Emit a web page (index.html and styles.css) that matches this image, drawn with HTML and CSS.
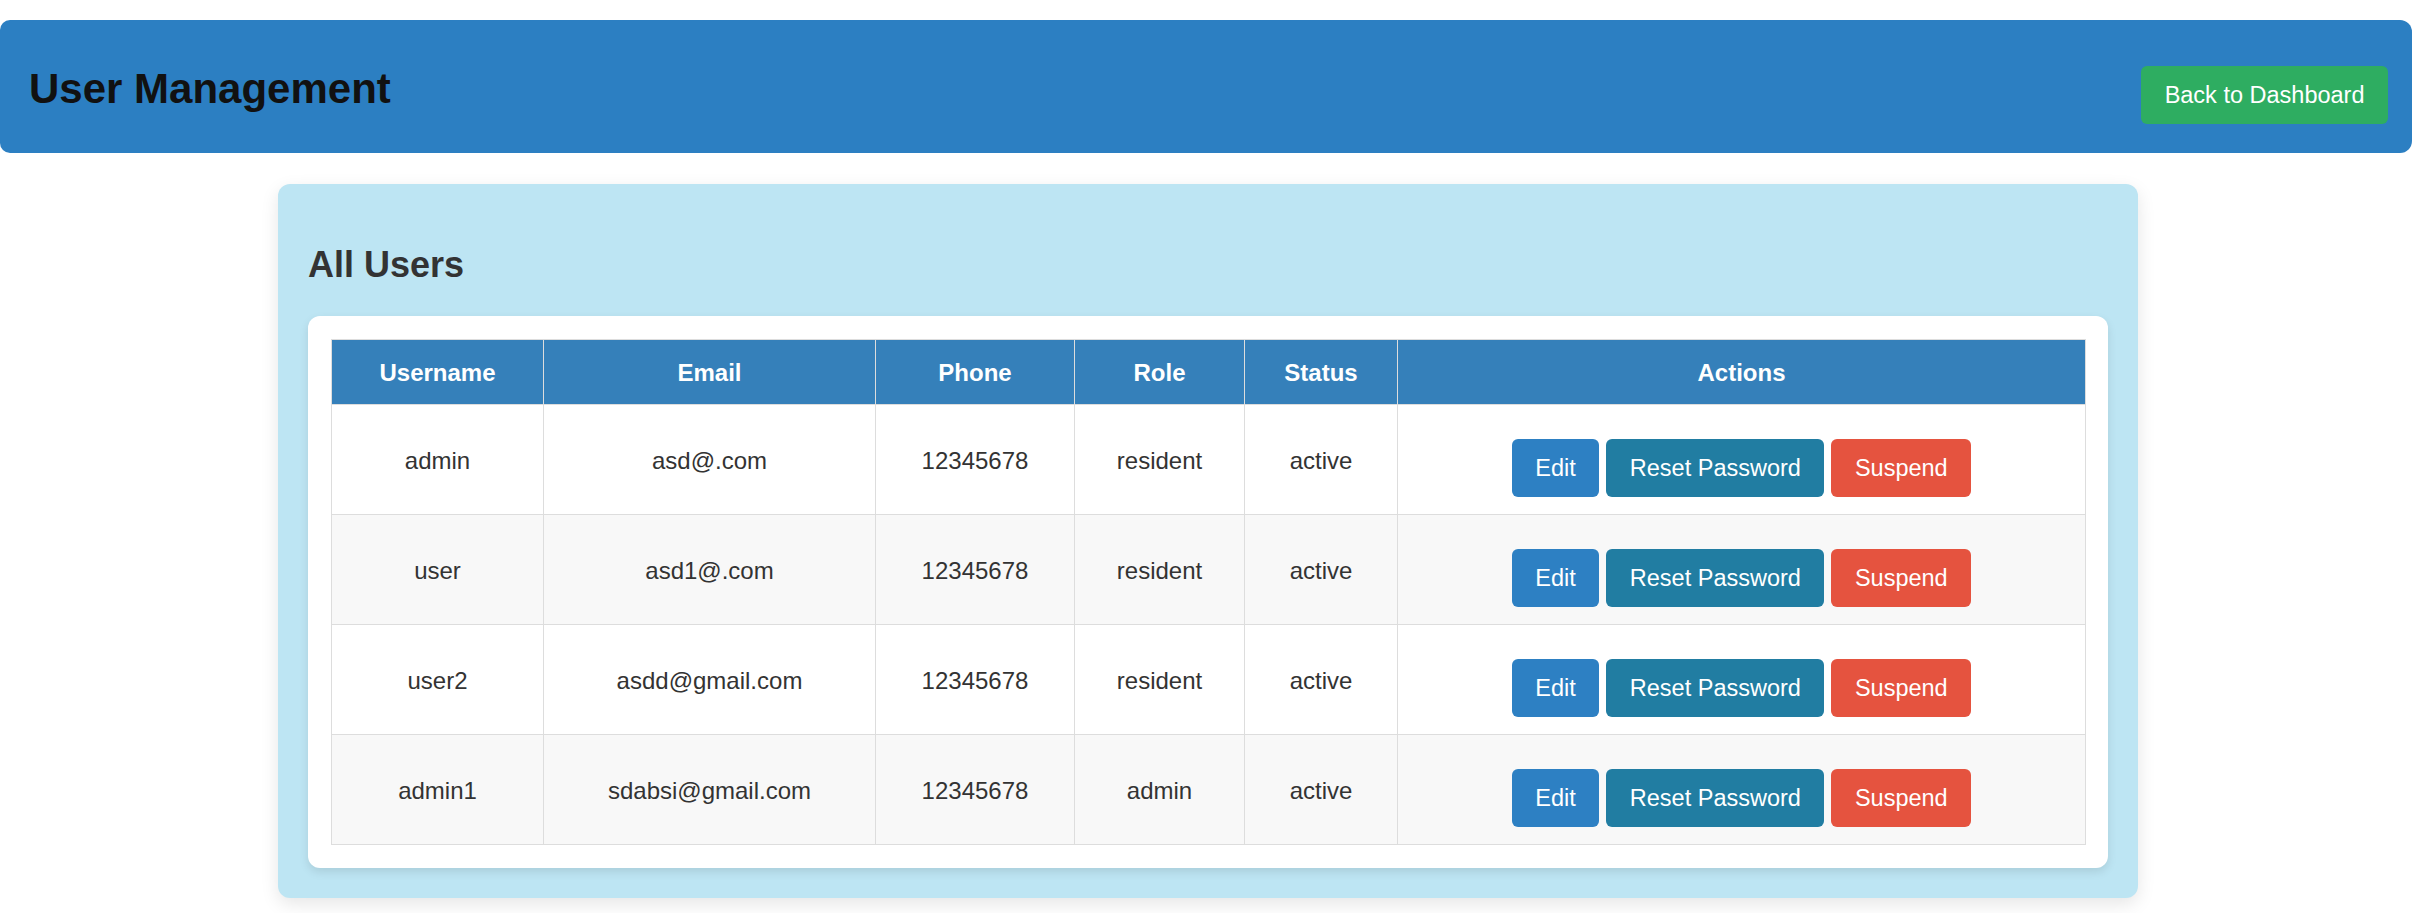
FILE: index.html
```html
<!DOCTYPE html>
<html lang="en">
<head>
<meta charset="utf-8">
<title>User Management</title>
<link rel="stylesheet" href="styles.css">
</head>
<body>
<div class="page">
  <header class="topbar">
    <h1 class="title">User Management</h1>
    <button class="btn btn-green">Back to Dashboard</button>
  </header>
  <main class="panel">
    <h2 class="panel-title">All Users</h2>
    <div class="table-box">
      <table class="users">
        <colgroup>
          <col class="c-user"><col class="c-email"><col class="c-phone"><col class="c-role"><col class="c-status"><col class="c-actions">
        </colgroup>
        <thead>
          <tr><th>Username</th><th>Email</th><th>Phone</th><th>Role</th><th>Status</th><th>Actions</th></tr>
        </thead>
        <tbody>
          <tr>
            <td>admin</td><td>asd@.com</td><td>12345678</td><td>resident</td><td>active</td>
            <td><div class="actions"><button class="btn btn-blue">Edit</button><button class="btn btn-teal">Reset Password</button><button class="btn btn-red">Suspend</button></div></td>
          </tr>
          <tr>
            <td>user</td><td>asd1@.com</td><td>12345678</td><td>resident</td><td>active</td>
            <td><div class="actions"><button class="btn btn-blue">Edit</button><button class="btn btn-teal">Reset Password</button><button class="btn btn-red">Suspend</button></div></td>
          </tr>
          <tr>
            <td>user2</td><td>asdd@gmail.com</td><td>12345678</td><td>resident</td><td>active</td>
            <td><div class="actions"><button class="btn btn-blue">Edit</button><button class="btn btn-teal">Reset Password</button><button class="btn btn-red">Suspend</button></div></td>
          </tr>
          <tr>
            <td>admin1</td><td>sdabsi@gmail.com</td><td>12345678</td><td>admin</td><td>active</td>
            <td><div class="actions"><button class="btn btn-blue">Edit</button><button class="btn btn-teal">Reset Password</button><button class="btn btn-red">Suspend</button></div></td>
          </tr>
        </tbody>
      </table>
    </div>
  </main>
</div>
</body>
</html>
```
FILE: styles.css
```css
html, body {
  margin: 0;
  padding: 0;
  background: #ffffff;
  font-family: "Liberation Sans", Arial, sans-serif;
}

.page {
  width: 2416px;
  padding-bottom: 20px;
}

.topbar {
  margin: 20px 4px 0 0;
  height: 133px;
  box-sizing: border-box;
  padding: 45px 24px 0 29px;
  background: #2c7fc2;
  border-radius: 10px 12px 12px 10px;
  display: flex;
  justify-content: space-between;
  align-items: flex-start;
}

.title {
  margin: 0;
  font-size: 42px;
  line-height: 47px;
  font-weight: bold;
  color: #111111;
}

.btn {
  font-family: "Liberation Sans", Arial, sans-serif;
  font-size: 23.5px;
  line-height: 27px;
  padding: 15.5px 23.5px;
  border: none;
  border-radius: 6px;
  color: #ffffff;
  cursor: pointer;
}

.topbar .btn {
  margin-top: 1px;
}

.btn-green { background: #2ead61; }
.btn-blue { background: #2d80c3; }
.btn-teal { background: #217da2; }
.btn-red { background: #e5533f; }

.panel {
  width: 1860px;
  box-sizing: border-box;
  margin: 31px auto 0;
  padding: 0 30px 30px;
  background: #bde5f3;
  border-radius: 12px;
  box-shadow: 0 6px 18px rgba(0, 0, 0, 0.1);
}

.panel-title {
  margin: 0;
  padding-top: 60px;
  margin-bottom: 31px;
  font-size: 36px;
  line-height: 41px;
  font-weight: bold;
  color: #333333;
}

.table-box {
  background: #ffffff;
  border-radius: 12px;
  padding: 23px;
  box-shadow: 0 4px 10px rgba(0, 0, 0, 0.1);
}

.users {
  width: 100%;
  border-collapse: collapse;
  table-layout: fixed;
  font-size: 24px;
}

.c-user { width: 212px; }
.c-email { width: 332px; }
.c-phone { width: 199px; }
.c-role { width: 170px; }
.c-status { width: 153px; }
.c-actions { width: 688px; }

.users th {
  background: #3580ba;
  color: #ffffff;
  font-weight: bold;
  line-height: 27px;
  padding: 18.5px 10px;
  border: 1px solid #dddddd;
  text-align: center;
}

.users td {
  color: #333333;
  line-height: 27px;
  padding: 18px 10px 17px;
  border: 1px solid #dddddd;
  text-align: center;
  vertical-align: middle;
}

.users tbody tr:nth-child(even) td {
  background: #f8f8f8;
}

.actions {
  display: flex;
  justify-content: center;
  gap: 7px;
  margin-top: 16px;
}
```
